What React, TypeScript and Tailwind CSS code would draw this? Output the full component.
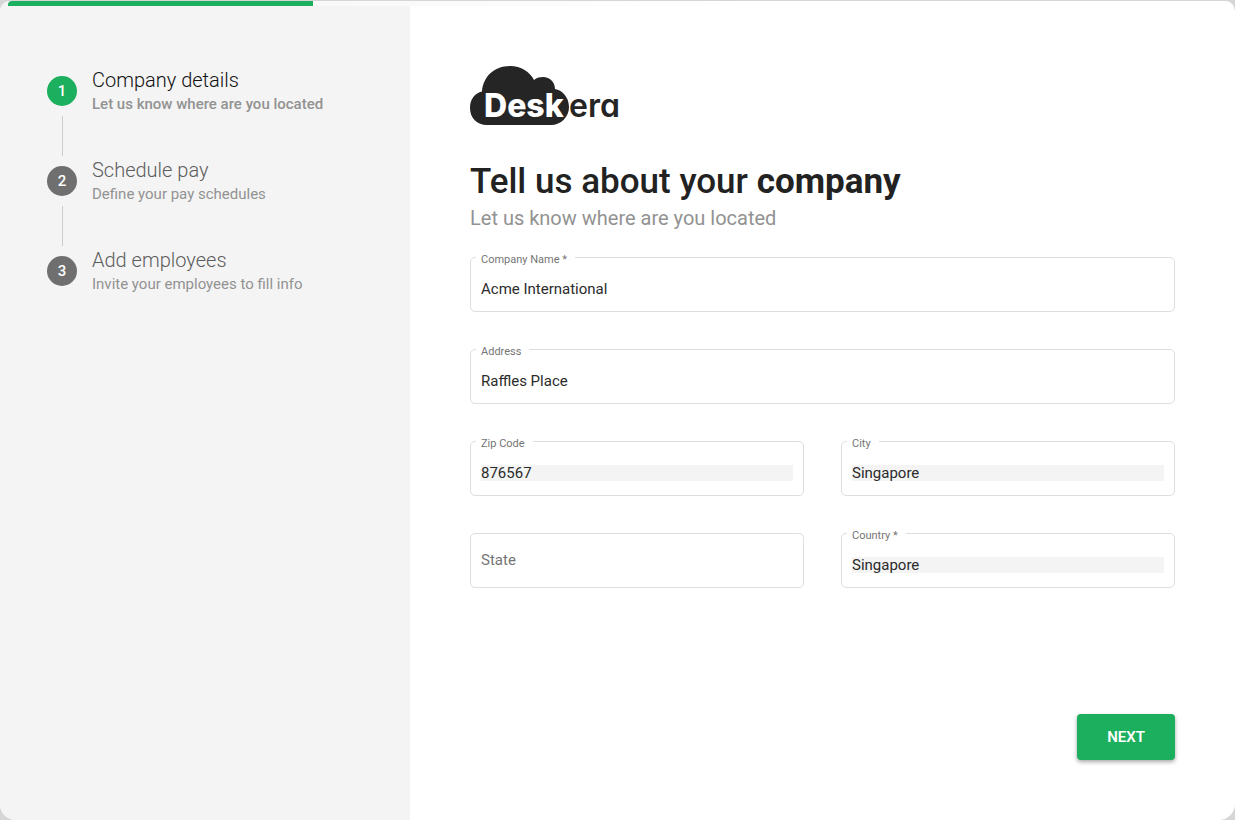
import { useId, useState } from "react";
import clsx from "clsx";

const steps = [
  { title: "Company details", hint: "Let us know where are you located" },
  { title: "Schedule pay", hint: "Define your pay schedules" },
  { title: "Add employees", hint: "Invite your employees to fill info" },
];

function Logo() {
  return (
    <svg viewBox="0 0 150 60" className="h-[60px] w-[150px]" role="img" aria-label="Deskera">
      <path
        d="M17 59C7 59 0 52 0 42C0 33 5 27 12 25.500C13 11 24 0 40 0C51 0 60 6 64 14C66 12 69 11 73 11C80 11 85 16 85 23C92 24 99 31 99 41C99 51 91 59 81 59Z"
        fill="#252525"
      />
      <text
        x="14"
        y="51"
        fontSize="32"
        fontWeight="800"
        fill="#ffffff"
        className="font-['Inter',sans-serif]"
      >
        Desk
      </text>
      <text
        x="99"
        y="51"
        fontSize="32"
        fontWeight="600"
        fill="#252525"
        className="font-['Inter',sans-serif] [font-feature-settings:'cv11']"
      >
        era
      </text>
    </svg>
  );
}

function Stepper({ current }: { current: number }) {
  return (
    <ol className="flex flex-col">
      {steps.map((step, index) => {
        const active = index === current;
        return (
          <li key={step.title} className="flex h-[90px] gap-[15px]" aria-current={active ? "step" : undefined}>
            <div className="flex w-[30px] flex-col items-center gap-[10px] pt-[10px]">
              <span
                className={clsx(
                  "flex size-[30px] shrink-0 items-center justify-center rounded-full text-[15px] font-medium text-white",
                  active ? "bg-[#1caf5d]" : "bg-[#6f6f6f]",
                )}
              >
                {index + 1}
              </span>
              {index < steps.length - 1 && <span className="h-10 w-px bg-[#cccccc]" />}
            </div>
            <div>
              <p className={clsx("text-[20px] leading-7 font-light", active ? "text-[#111111]" : "text-[#5c5c5c]")}>
                {step.title}
              </p>
              <p className={clsx("text-[15px] leading-5 text-[#929292]", active && "font-medium")}>
                {step.hint}
              </p>
            </div>
          </li>
        );
      })}
    </ol>
  );
}

type FieldProps = {
  label: string;
  initial?: string;
  required?: boolean;
  filled?: boolean;
};

function Field({ label, initial = "", required = false, filled = false }: FieldProps) {
  const id = useId();
  const [value, setValue] = useState(initial);
  const floating = value !== "";
  return (
    <div className="relative flex rounded-[5px] border border-[#dedede] px-[10px] pt-[23px] pb-[14px]">
      <label
        htmlFor={id}
        className={clsx(
          "absolute left-[5px] pl-[5px] text-[#757575]",
          floating ? "-top-[6px] bg-white pr-2 text-[11px] leading-4" : "inset-y-0 flex items-center text-[15px]",
        )}
      >
        {label}
        {required && " *"}
      </label>
      <input
        id={id}
        value={value}
        required={required}
        onChange={(event) => setValue(event.target.value)}
        className={clsx(
          "h-4 w-full min-w-0 text-[15px] leading-4 text-[#2b2b2b] outline-none",
          filled && floating && "bg-[#f4f4f4]",
        )}
      />
    </div>
  );
}

export default function App() {
  return (
    <div className="flex min-h-screen flex-col bg-[#d6d6d6] pt-px font-['Roboto',sans-serif]">
      <div className="flex flex-1 flex-col overflow-hidden rounded-t-[10px] rounded-b-2xl bg-white">
        <div className="bg-linear-to-r from-[#f4f4f4] to-white to-60% px-2">
          <div className="h-[5px] w-1/4 rounded-tl-[4px] bg-[#1caf5d]" />
        </div>
        <div className="flex flex-1">
          <aside className="w-[410px] shrink-0 bg-[#f4f4f4] px-[47px] pt-[60px]">
            <Stepper current={0} />
          </aside>
          <main className="flex min-w-0 flex-1 flex-col px-[60px] py-[60px]">
            <Logo />
            <h1 className="mt-[34px] text-[35px] leading-[44px] font-medium text-[#222222]">
              Tell us about your <strong className="font-bold">company</strong>
            </h1>
            <p className="mt-[2px] text-[20px] leading-6 text-[#929292]">Let us know where are you located</p>
            <form className="mt-[27px] flex flex-1 flex-col" onSubmit={(event) => event.preventDefault()}>
              <div className="flex flex-col gap-[37px]">
                <Field label="Company Name" initial="Acme International" required />
                <Field label="Address" initial="Raffles Place" />
                <div className="grid grid-cols-2 gap-[37px]">
                  <Field label="Zip Code" initial="876567" filled />
                  <Field label="City" initial="Singapore" filled />
                  <Field label="State" />
                  <Field label="Country" initial="Singapore" required filled />
                </div>
              </div>
              <button
                type="submit"
                className="mt-auto self-end rounded-[4px] bg-[#1caf5d] px-[30px] py-[13px] text-[15px] leading-5 font-semibold text-white shadow-[0_2px_4px_rgba(0,0,0,0.35)]"
              >
                NEXT
              </button>
            </form>
          </main>
        </div>
      </div>
    </div>
  );
}
